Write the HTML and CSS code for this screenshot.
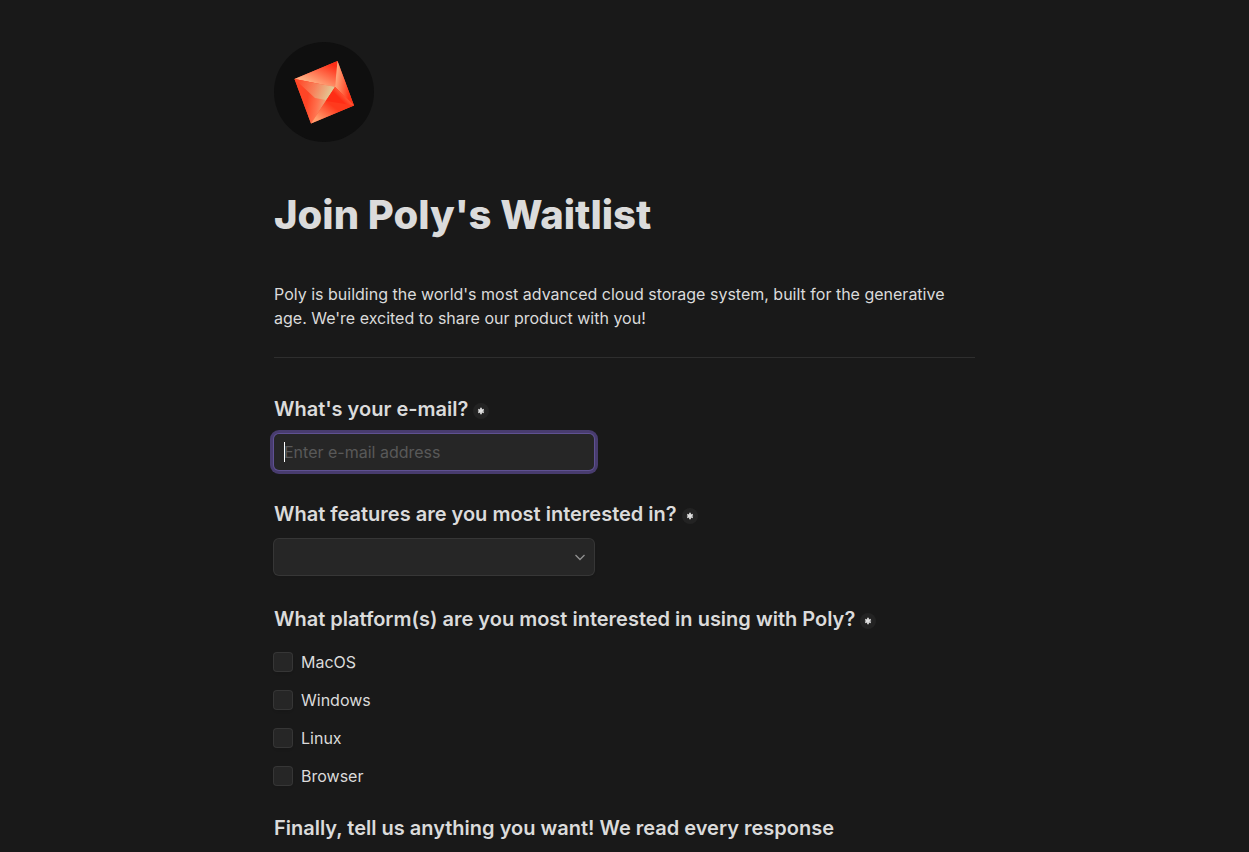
FILE: index.html
```
<!DOCTYPE html>
<html lang="en">
<head>
  <meta charset="utf-8">
  <meta name="viewport" content="width=device-width, initial-scale=1">
  <title>Join Poly's Waitlist</title>
  <link rel="stylesheet" href="styles.css">
</head>
<body>
  <main class="page">
    <svg class="logo" viewBox="0 0 100 100" role="img" aria-label="Poly">
      <defs>
        <linearGradient id="top" gradientUnits="userSpaceOnUse" x1="46" y1="45" x2="57" y2="22">
          <stop offset="0" stop-color="#ffad80"/><stop offset="1" stop-color="#ff2d16"/>
        </linearGradient>
        <linearGradient id="right" gradientUnits="userSpaceOnUse" x1="61" y1="44" x2="76" y2="46">
          <stop offset="0" stop-color="#ffa67a"/><stop offset="1" stop-color="#ff3519"/>
        </linearGradient>
        <linearGradient id="left" gradientUnits="userSpaceOnUse" x1="32" y1="64" x2="54" y2="68">
          <stop offset="0" stop-color="#ff4526"/><stop offset="0.500" stop-color="#ff7450"/><stop offset="1" stop-color="#e6b888"/>
        </linearGradient>
        <linearGradient id="middle" gradientUnits="userSpaceOnUse" x1="24" y1="40" x2="56" y2="52">
          <stop offset="0" stop-color="#ff4b2a"/><stop offset="0.500" stop-color="#f87f59"/><stop offset="1" stop-color="#e3c592"/>
        </linearGradient>
        <linearGradient id="bottom" gradientUnits="userSpaceOnUse" x1="44" y1="78" x2="56" y2="62">
          <stop offset="0" stop-color="#ffa070"/><stop offset="1" stop-color="#ff3a1d"/>
        </linearGradient>
        <linearGradient id="corner" gradientUnits="userSpaceOnUse" x1="63" y1="54" x2="69" y2="48">
          <stop offset="0" stop-color="#ff2d15"/><stop offset="1" stop-color="#ff7049"/>
        </linearGradient>
      </defs>
      <circle cx="50" cy="50" r="50" fill="#0f0f0f"/>
      <path d="M20.500 37 63.500 19 80 63.500 37 81.500Z" fill="#ff5032"/>
      <path d="M20.500 37 63.500 19 61 45Z" fill="url(#top)"/>
      <path d="M63.500 19 80 63.500 61 45Z" fill="url(#right)"/>
      <path d="M20.500 37 61 45 37 81.500Z" fill="url(#left)"/>
      <path d="M20.500 37 61 45 52 58 41 56Z" fill="url(#middle)"/>
      <path d="M61 45 80 63.500 37 81.500Z" fill="url(#bottom)"/>
      <path d="M61 45 80 63.500 52 59Z" fill="url(#corner)"/>
    </svg>

    <h1 class="title">Join Poly's Waitlist</h1>
    <p class="intro">Poly is building the world's most advanced cloud storage system, built for the generative age. We're excited to share our product with you!</p>
    <hr class="divider">

    <form class="form">
      <div class="field">
        <div class="question-row">
          <label class="question" for="email">What's your e-mail?</label>
          <span class="required"><svg class="star" viewBox="0 0 8 8" aria-label="required"><path d="M4 .8v6.400M1.200 2.400l5.600 3.200M6.800 2.400l-5.600 3.200"/></svg></span>
        </div>
        <div class="control control-active">
          <input class="input" id="email" type="email" placeholder="Enter e-mail address" required autofocus>
        </div>
      </div>

      <div class="field">
        <div class="question-row">
          <label class="question" for="features">What features are you most interested in?</label>
          <span class="required"><svg class="star" viewBox="0 0 8 8" aria-label="required"><path d="M4 .8v6.400M1.200 2.400l5.600 3.200M6.800 2.400l-5.600 3.200"/></svg></span>
        </div>
        <div class="control">
          <select class="input" id="features" required><option value=""></option></select>
          <svg class="chevron" viewBox="0 0 12 12" aria-hidden="true"><path d="M1.500 4 6 8.500 10.500 4"/></svg>
        </div>
      </div>

      <fieldset class="field field-choices">
        <legend class="question-row">
          <span class="question">What platform(s) are you most interested in using with Poly?</span>
          <span class="required"><svg class="star" viewBox="0 0 8 8" aria-label="required"><path d="M4 .8v6.400M1.200 2.400l5.600 3.200M6.800 2.400l-5.600 3.200"/></svg></span>
        </legend>
        <div class="choices">
          <label class="choice"><input class="checkbox" type="checkbox" name="platform" value="macos">MacOS</label>
          <label class="choice"><input class="checkbox" type="checkbox" name="platform" value="windows">Windows</label>
          <label class="choice"><input class="checkbox" type="checkbox" name="platform" value="linux">Linux</label>
          <label class="choice"><input class="checkbox" type="checkbox" name="platform" value="browser">Browser</label>
        </div>
      </fieldset>

      <h2 class="question">Finally, tell us anything you want! We read every response</h2>
    </form>
  </main>
</body>
</html>
```

FILE: styles.css
```
* {
  box-sizing: border-box;
}

body {
  margin: 0;
  background: #191919;
  color: #dbdbdb;
  font: 400 16px/24px Inter, "Liberation Sans", sans-serif;
}

.page {
  max-width: 701px;
  margin: 0 auto;
  padding-top: 42px;
}

.logo {
  display: block;
  width: 100px;
  height: 100px;
}

.title {
  margin: 49px 0 0;
  font-size: 40px;
  font-weight: 800;
  line-height: 48px;
}

.intro {
  margin: 43px 0 0;
}

.divider {
  height: 1px;
  margin: 27px 0 39px;
  border: 0;
  background: #2e2e2e;
}

.form,
.choices {
  display: flex;
  flex-direction: column;
}

.field {
  margin: 0 0 32px;
  padding: 0;
  border: 0;
}

.field-choices {
  margin-bottom: 28px;
}

.question-row {
  display: flex;
  align-items: center;
  gap: 5px;
  margin-bottom: 13px;
  padding: 0;
}

.question {
  margin: 0;
  font-size: 20px;
  font-weight: 600;
  line-height: 24px;
}

.required {
  display: flex;
  align-items: center;
  justify-content: center;
  width: 16px;
  height: 16px;
  margin-top: 4px;
  border-radius: 50%;
  background: #232323;
}

.star {
  width: 8px;
  height: 8px;
  fill: none;
  stroke: #e0e0e0;
  stroke-width: 1.7;
}

.control {
  position: relative;
  max-width: 320px;
}

.input {
  display: block;
  width: 100%;
  height: 36px;
  padding: 0 10px;
  border: 0;
  border-radius: 5px;
  outline: 0;
  appearance: none;
  background: #262626;
  box-shadow: 0 0 0 1px #363636, 0 2px 3px #00000020;
  color: inherit;
  font: inherit;
}

.input::placeholder {
  color: #595959;
  opacity: 1;
}

.input:focus,
.control-active .input {
  box-shadow: 0 0 0 1px #5f5192, 0 0 0 4px #483c6e;
  caret-color: transparent;
}

/* Insertion mark of the active text box */
.control-active::after {
  content: "";
  position: absolute;
  top: 8px;
  left: 10px;
  width: 1px;
  height: 20px;
  background: #ffffff;
}

.chevron {
  position: absolute;
  top: 12px;
  right: 8px;
  width: 12px;
  height: 12px;
  fill: none;
  stroke: #919191;
  stroke-width: 1.3;
  pointer-events: none;
}

.choices {
  gap: 14px;
  padding-top: 6px;
}

.choice {
  display: flex;
  align-items: center;
  align-self: flex-start;
  gap: 9px;
}

.checkbox {
  width: 18px;
  height: 18px;
  margin: 0;
  border-radius: 3px;
  appearance: none;
  background: #262626;
  box-shadow: 0 0 0 1px #363636, 0 2px 3px #00000020;
}

.checkbox:checked {
  background: #5f5192;
}
```
